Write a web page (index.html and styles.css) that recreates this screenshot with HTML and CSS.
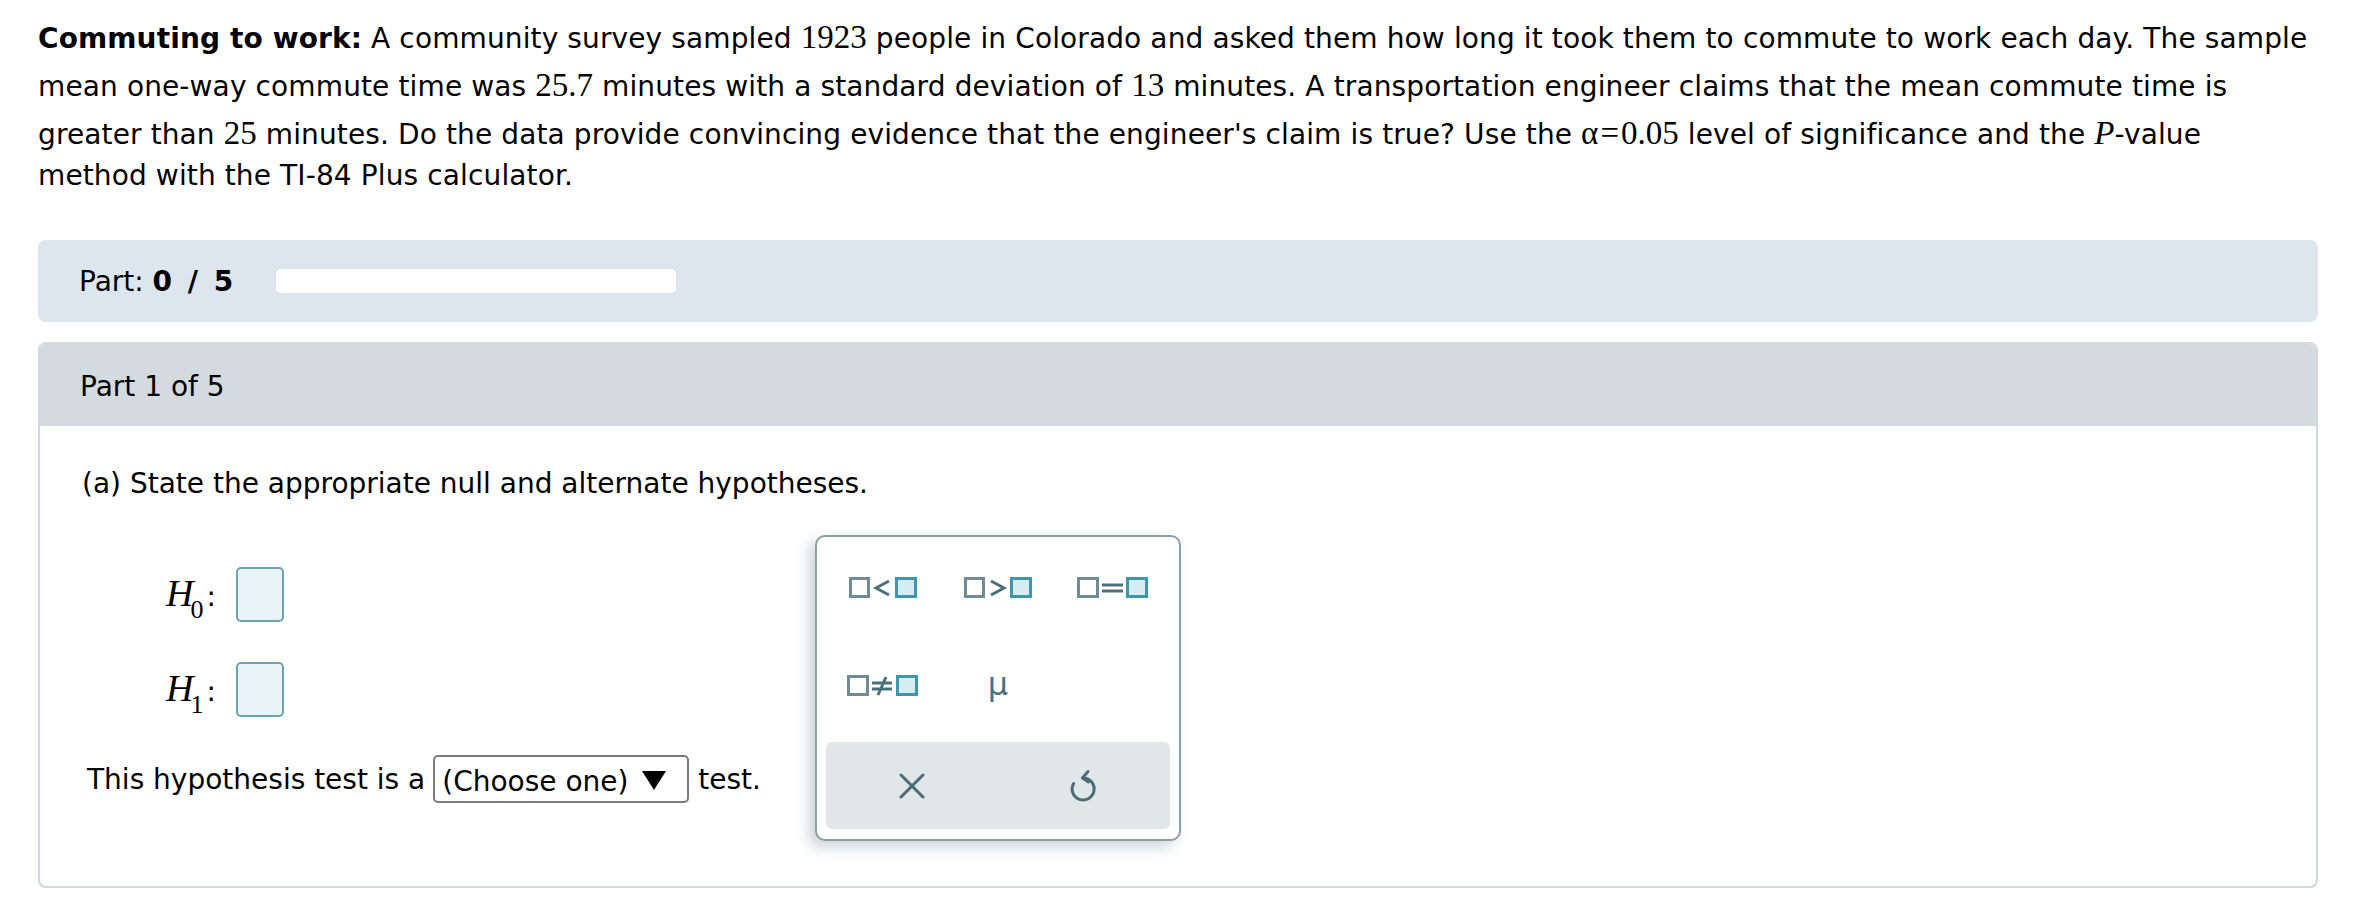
FILE: index.html
```html
<!DOCTYPE html>
<html lang="en">
<head>
<meta charset="utf-8">
<title>Commuting to work</title>
<link rel="stylesheet" href="styles.css">
</head>
<body>
<div class="page">
  <p class="problem"><b>Commuting to work:</b> A community survey sampled <span class="m">1923</span> people in Colorado and asked them how long it took them to commute to work each day. The sample mean one-way commute time was <span class="m">25.7</span> minutes with a standard deviation of <span class="m">13</span> minutes. A transportation engineer claims that the mean commute time is greater than <span class="m">25</span> minutes. Do the data provide convincing evidence that the engineer's claim is true? Use the <span class="m">α<span class="eq">=</span>0.05</span> level of significance and the <span class="m mi">P</span>-value method with the TI-84 Plus calculator.</p>

  <div class="part-bar">
    <span>Part: <b class="count">0 / 5</b></span>
    <span class="track"></span>
  </div>

  <section class="card">
    <div class="card-head">Part 1 of 5</div>
    <div class="card-body">
      <p class="q">(a) State the appropriate null and alternate hypotheses.</p>
      <div class="hyp">
        <div class="hrow"><span class="hl"><i>H</i><span class="sub">0</span><span class="colon">:</span></span><span class="box"></span></div>
        <div class="hrow"><span class="hl"><i>H</i><span class="sub">1</span><span class="colon">:</span></span><span class="box"></span></div>
      </div>
      <div class="sel-line">
        <span>This hypothesis test is a</span>
        <span class="select"><span>(Choose one)</span><svg class="caret" width="26" height="20" viewBox="0 0 26 20"><polygon points="1,1 25,1 13,20" fill="#000"/></svg></span>
        <span>test.</span>
      </div>

      <div class="palette">
        <div class="pal-grid">
          <button class="pbtn" title="less than"><svg width="68" height="22" viewBox="0 0 68 22"><rect x="1.5" y="1.5" width="18" height="18" class="s1"/><polyline points="40,4 27,11 40,18" class="op"/><rect x="47.5" y="1.5" width="19" height="18" class="s2"/></svg></button>
          <button class="pbtn" title="greater than"><svg width="68" height="22" viewBox="0 0 68 22"><rect x="1.5" y="1.5" width="18" height="18" class="s1"/><polyline points="27,4 40,11 27,18" class="op"/><rect x="47.5" y="1.5" width="19" height="18" class="s2"/></svg></button>
          <button class="pbtn" title="equals"><svg width="72" height="22" viewBox="0 0 72 22"><rect x="1.5" y="1.5" width="19" height="18" class="s1"/><line x1="25" y1="8" x2="46" y2="8" class="op"/><line x1="25" y1="14" x2="46" y2="14" class="op"/><rect x="50.5" y="1.5" width="19" height="18" class="s2"/></svg></button>
          <button class="pbtn" title="not equal"><svg width="72" height="22" viewBox="0 0 72 22"><rect x="1.5" y="1.5" width="19" height="18" class="s1"/><line x1="25" y1="8" x2="45" y2="8" class="op"/><line x1="25" y1="14" x2="45" y2="14" class="op"/><line x1="39" y1="2" x2="31" y2="20" class="op"/><rect x="50.5" y="1.5" width="19" height="18" class="s2"/></svg></button>
          <button class="pbtn mu" title="mu">μ</button>
        </div>
        <div class="pal-foot">
          <button class="fbtn" title="clear"><svg width="26" height="26" viewBox="0 0 26 26"><line x1="2" y1="2" x2="24" y2="24"/><line x1="24" y1="2" x2="2" y2="24"/></svg></button>
          <button class="fbtn" title="undo"><svg width="30" height="36" viewBox="0 0 30 36"><path d="M14 10 A11 11 0 1 1 4.6 15.5"/><path d="M19 3.5 L13.5 10 L19.5 14"/></svg></button>
        </div>
      </div>
    </div>
  </section>
</div>
</body>
</html>
```

FILE: styles.css
```css
html, body {
  margin: 0;
  background: #fff;
}
body {
  font-family: "DejaVu Sans", Verdana, sans-serif;
  font-size: 28px;
  color: #000;
}
.page {
  padding: 11px 42px 0 38px;
}
.problem {
  margin: 0;
  line-height: 41px;
  letter-spacing: 0.12px;
}
.m {
  display: inline-block;
  font-family: "Liberation Serif", "Times New Roman", serif;
  font-size: 33px;
  line-height: 1;
  padding-top: 10px;
  letter-spacing: 0;
}
.eq {
  margin: 0 2px;
}
.mi {
  font-style: italic;
}
.part-bar {
  margin-top: 44px;
  height: 82px;
  background: #dde6ef;
  border-radius: 8px;
  display: flex;
  align-items: center;
  padding-left: 41px;
}
.count {
  word-spacing: 5px;
  letter-spacing: 0.5px;
}
.track {
  width: 400px;
  height: 24px;
  background: #fff;
  border-radius: 5px;
  margin-left: 42px;
}
.card {
  margin-top: 20px;
  border: 2px solid #d0d8dc;
  border-top-color: #d3dbdf;
  border-radius: 8px;
}
.card-head {
  height: 82px;
  background: #d3dbdf;
  padding-left: 40px;
  padding-top: 2px;
  box-sizing: border-box;
  display: flex;
  align-items: center;
  border-radius: 6px 6px 0 0;
}
.card-body {
  position: relative;
  padding: 35px 0 83px 42px;
}
.q {
  margin: 0;
  line-height: 46px;
}
.hyp {
  margin-top: 60px;
  padding-left: 84px;
  display: flex;
  flex-direction: column;
  gap: 40px;
}
.hrow {
  display: flex;
  align-items: center;
  gap: 12px;
  height: 55px;
}
.hl {
  width: 58px;
  font-family: "Liberation Serif", "Times New Roman", serif;
  font-size: 38px;
  line-height: 1;
  display: flex;
  align-items: baseline;
  position: relative;
  top: -2px;
}
.hl i {
  font-style: italic;
}
.hl .sub {
  font-size: 26px;
  position: relative;
  top: 12px;
  margin-left: -3px;
}
.hl .colon {
  font-family: "DejaVu Sans", Verdana, sans-serif;
  font-size: 28px;
  margin-left: 3px;
}
.box {
  width: 48px;
  height: 55px;
  box-sizing: border-box;
  border: 2px solid #6aa2b0;
  background: #e8f3f8;
  border-radius: 5px;
}
.sel-line {
  margin-top: 38px;
  padding-left: 5px;
  height: 48px;
  display: flex;
  align-items: center;
}
.select {
  width: 256px;
  height: 48px;
  box-sizing: border-box;
  border: 2px solid #7b7b7b;
  border-radius: 5px;
  display: flex;
  align-items: center;
  justify-content: space-between;
  padding: 4px 20px 0 7px;
  margin: 0 9px 0 8px;
}
.caret {
  display: block;
  margin-top: -2px;
}
.palette {
  position: absolute;
  left: 775px;
  top: 109px;
  width: 366px;
  height: 306px;
  box-sizing: border-box;
  background: #fff;
  border: 2px solid #8b9fa7;
  border-radius: 10px;
  box-shadow: -6px 6px 14px rgba(40, 60, 70, 0.22);
}
.pal-grid {
  display: grid;
  grid-template-columns: repeat(3, 1fr);
  grid-auto-rows: 98px;
  padding: 2px 9px 0;
}
.pbtn, .fbtn {
  border: 0;
  background: transparent;
  padding: 0;
  margin: 0;
  display: flex;
  align-items: center;
  justify-content: center;
  font: inherit;
}
.pbtn svg {
  display: block;
}
.s1 {
  fill: none;
  stroke: #6f8b95;
  stroke-width: 3;
}
.s2 {
  fill: #d5ecf2;
  stroke: #3c97ae;
  stroke-width: 3;
}
.op {
  fill: none;
  stroke: #4d6f7a;
  stroke-width: 3;
}
.mu {
  font-family: "DejaVu Sans", Verdana, sans-serif;
  font-size: 32px;
  color: #4d6f7a;
  padding-bottom: 4px;
}
.pal-foot {
  margin: 7px 9px 0;
  height: 87px;
  background: #e1e6e9;
  border-radius: 6px;
  display: grid;
  grid-template-columns: 1fr 1fr;
  align-items: center;
  justify-items: center;
}
.fbtn svg {
  display: block;
  fill: none;
  stroke: #4a6d78;
  stroke-width: 3;
  stroke-linecap: round;
  stroke-linejoin: round;
}
```
